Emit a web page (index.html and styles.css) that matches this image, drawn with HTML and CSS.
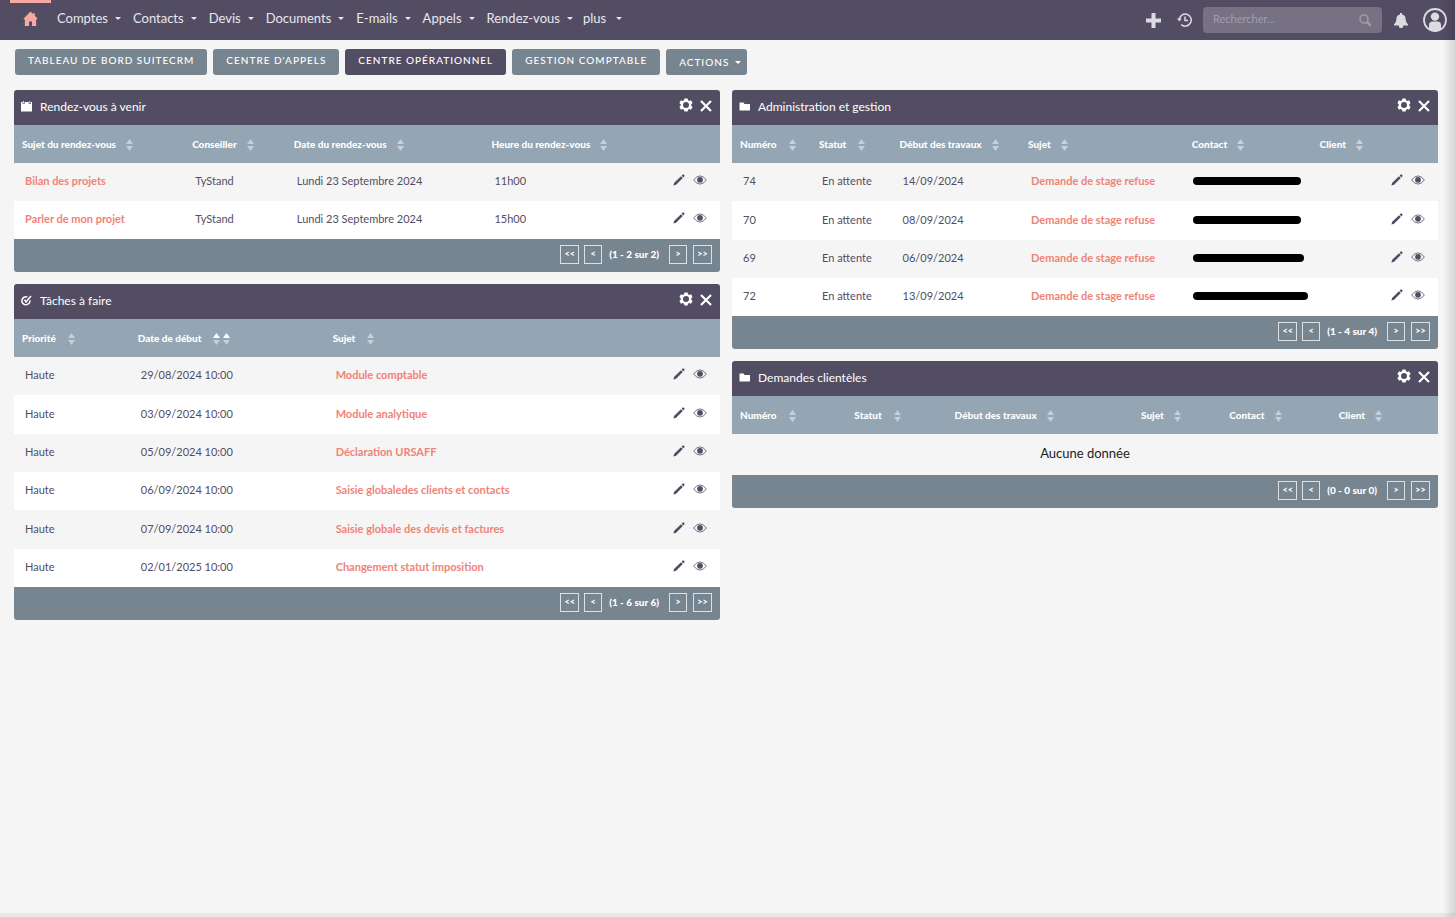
FILE: index.html
```html
<!DOCTYPE html>
<html lang="fr">
<head>
<meta charset="utf-8">
<title>SuiteCRM</title>
<link rel="stylesheet" href="styles.css">
</head>
<body>
<svg class="sprite" aria-hidden="true">
  <symbol id="i-home" viewBox="0 0 16 16"><path d="M8 0 0.5 7.6 1.2 8.6H2V15.5H6.4V10.6H9.6V15.5H14V8.6H14.8L15.5 7.6 12.6 4.6V1.8H10.8V2.8Z"/></symbol>
  <symbol id="i-sort" viewBox="0 0 7 12"><path class="up" d="M3.5 0 7 5H0Z"/><path class="down" d="M0 7H7L3.5 12Z"/></symbol>
  <symbol id="i-gear" viewBox="0 0 14 14"><path fill-rule="evenodd" d="M5.4 0.4H8.6L9 2.2 10.3 2.9 12 2.3 13.6 5 12.3 6.3V7.7L13.6 9 12 11.7 10.3 11.1 9 11.8 8.6 13.6H5.4L5 11.8 3.7 11.1 2 11.7 0.4 9 1.7 7.7V6.3L0.4 5 2 2.3 3.7 2.9 5 2.2ZM7 4A3 3 0 1 0 7 10 3 3 0 1 0 7 4Z"/></symbol>
  <symbol id="i-close" viewBox="0 0 12 12"><path d="M1 1 11 11M11 1 1 11" fill="none" stroke="currentColor" stroke-width="2.2"/></symbol>
  <symbol id="i-pencil" viewBox="0 0 12 12"><path d="M0.4 11.6 1.2 8.8 8 2.2 9.8 4 3.1 10.7ZM8.6 1.6 9.7 0.6Q10.2 0.2 10.8 0.6L11.3 1.1Q11.8 1.7 11.4 2.2L10.4 3.4Z"/></symbol>
  <symbol id="i-eye" viewBox="0 0 14 10"><path d="M0.6 5Q7 -3.2 13.4 5 7 13.2 0.6 5Z" fill="none" stroke="currentColor" stroke-width="0.8"/><circle cx="7" cy="4.8" r="2.9"/></symbol>
  <symbol id="i-folder" viewBox="0 0 12 9"><path d="M0.5 0.5H4.5L5.5 2H11V8.5H0.5Z"/></symbol>
  <symbol id="i-calendar" viewBox="0 0 12 11"><path d="M0 1H1.6V3H3.6V1H7.8V3H9.8V1H11V10.4H0Z"/><path d="M2.2 0H3V2.4H2.2ZM8.4 0H9.2V2.4H8.4Z"/></symbol>
  <symbol id="i-task" viewBox="0 0 12 11"><path d="M8.9 5.4A4 4 0 1 1 6.4 2.1M3.6 4.6 5 7 10 0.9" fill="none" stroke="currentColor" stroke-width="1.5"/></symbol>
  <symbol id="i-plus" viewBox="0 0 15 15"><path d="M5.5 0H9.5V5.5H15V9.5H9.5V15H5.5V9.5H0V5.5H5.5Z"/></symbol>
  <symbol id="i-history" viewBox="0 0 15 14"><path d="M2.2 7A6 6 0 1 1 4.2 11.6M8 3.6V7.6H11" fill="none" stroke="currentColor" stroke-width="1.5"/><path d="M0 5.5H4.8L2.3 8.6Z"/></symbol>
  <symbol id="i-search" viewBox="0 0 13 13"><circle cx="5" cy="5" r="4" fill="none" stroke="currentColor" stroke-width="1.6"/><path d="M8 8 11.6 11.6" stroke="currentColor" stroke-width="2.8"/></symbol>
  <symbol id="i-bell" viewBox="0 0 14 15"><path d="M6 0H8V1.4Q11.6 2 11.6 6 11.6 9.6 14 11.4V12.6H9V14.2L8 15H6L5 14.2V12.6H0V11.4Q2.4 9.6 2.4 6 2.4 2 6 1.4Z"/></symbol>
  <symbol id="i-user" viewBox="0 0 24 24"><circle cx="12" cy="12" r="11" fill="none" stroke="currentColor" stroke-width="1.8"/><circle cx="12" cy="8.6" r="4.2"/><path d="M6 21V17Q6 13.4 9.6 13.4H14.4Q18 13.4 18 17V21Q12 25 6 21Z"/></symbol>
</svg>

<header class="topbar">
  <nav class="menu">
    <a class="home" href="#" aria-label="Accueil"><svg width="15" height="16"><use href="#i-home"/></svg></a>
    <a class="menu-item caret" href="#">Comptes</a>
    <a class="menu-item caret" href="#">Contacts</a>
    <a class="menu-item caret" href="#">Devis</a>
    <a class="menu-item caret" href="#">Documents</a>
    <a class="menu-item caret" href="#">E-mails</a>
    <a class="menu-item caret" href="#">Appels</a>
    <a class="menu-item caret" href="#">Rendez-vous</a>
    <a class="menu-item caret more" href="#">plus</a>
  </nav>
  <div class="tools">
    <button class="icon-btn" type="button" aria-label="Créer"><svg width="15" height="15"><use href="#i-plus"/></svg></button>
    <button class="icon-btn history" type="button" aria-label="Historique"><svg width="15" height="14"><use href="#i-history"/></svg></button>
    <form class="search">
      <input type="text" placeholder="Rechercher..." aria-label="Rechercher">
      <button class="icon-btn" type="button" aria-label="Lancer la recherche"><svg width="13" height="13"><use href="#i-search"/></svg></button>
    </form>
    <button class="icon-btn bell" type="button" aria-label="Notifications"><svg width="14" height="15"><use href="#i-bell"/></svg></button>
    <button class="icon-btn user" type="button" aria-label="Profil"><svg width="24" height="24"><use href="#i-user"/></svg></button>
  </div>
</header>

<main class="page">
  <div class="tabs">
    <button class="tab" type="button">TABLEAU DE BORD SUITECRM</button>
    <button class="tab" type="button">CENTRE D'APPELS</button>
    <button class="tab active" type="button">CENTRE OPÉRATIONNEL</button>
    <button class="tab" type="button">GESTION COMPTABLE</button>
    <button class="tab actions caret" type="button">ACTIONS</button>
  </div>

  <div class="columns">
    <div class="column">
      <section class="panel">
        <header class="panel-head">
          <svg width="12" height="11"><use href="#i-calendar"/></svg>
          <h2>Rendez-vous à venir</h2>
          <button class="icon-btn gear" type="button" aria-label="Configurer"><svg width="14" height="14"><use href="#i-gear"/></svg></button>
          <button class="icon-btn close" type="button" aria-label="Fermer"><svg width="12" height="12"><use href="#i-close"/></svg></button>
        </header>
        <table class="grid meetings">
          <colgroup><col class="c1"><col class="c2"><col class="c3"><col><col class="row-tools"></colgroup>
          <thead><tr>
            <th>Sujet du rendez-vous<svg class="sort"><use href="#i-sort"/></svg></th>
            <th>Conseiller<svg class="sort"><use href="#i-sort"/></svg></th>
            <th>Date du rendez-vous<svg class="sort"><use href="#i-sort"/></svg></th>
            <th>Heure du rendez-vous<svg class="sort"><use href="#i-sort"/></svg></th>
            <th></th>
          </tr></thead>
          <tbody>
            <tr><td><a href="#">Bilan des projets</a></td><td>TyStand</td><td>Lundi 23 Septembre 2024</td><td>11h00</td><td class="acts"><svg class="pencil"><use href="#i-pencil"/></svg><svg class="eye"><use href="#i-eye"/></svg></td></tr>
            <tr><td><a href="#">Parler de mon projet</a></td><td>TyStand</td><td>Lundi 23 Septembre 2024</td><td>15h00</td><td class="acts"><svg class="pencil"><use href="#i-pencil"/></svg><svg class="eye"><use href="#i-eye"/></svg></td></tr>
          </tbody>
        </table>
        <footer class="pager">
          <button class="far" type="button">&lt;&lt;</button><button type="button">&lt;</button><span>(1 - 2 sur 2)</span><button type="button">&gt;</button><button class="far" type="button">&gt;&gt;</button>
        </footer>
      </section>

      <section class="panel">
        <header class="panel-head">
          <svg width="12" height="11"><use href="#i-task"/></svg>
          <h2>Tâches à faire</h2>
          <button class="icon-btn gear" type="button" aria-label="Configurer"><svg width="14" height="14"><use href="#i-gear"/></svg></button>
          <button class="icon-btn close" type="button" aria-label="Fermer"><svg width="12" height="12"><use href="#i-close"/></svg></button>
        </header>
        <table class="grid tasks">
          <colgroup><col class="c1"><col class="c2"><col><col class="row-tools"></colgroup>
          <thead><tr>
            <th>Priorité<svg class="sort wide"><use href="#i-sort"/></svg></th>
            <th>Date de début<svg class="sort wide asc"><use href="#i-sort"/></svg><svg class="sort asc next"><use href="#i-sort"/></svg></th>
            <th>Sujet<svg class="sort wide"><use href="#i-sort"/></svg></th>
            <th></th>
          </tr></thead>
          <tbody>
            <tr><td>Haute</td><td>29/08/2024 10:00</td><td><a href="#">Module comptable</a></td><td class="acts"><svg class="pencil"><use href="#i-pencil"/></svg><svg class="eye"><use href="#i-eye"/></svg></td></tr>
            <tr><td>Haute</td><td>03/09/2024 10:00</td><td><a href="#">Module analytique</a></td><td class="acts"><svg class="pencil"><use href="#i-pencil"/></svg><svg class="eye"><use href="#i-eye"/></svg></td></tr>
            <tr><td>Haute</td><td>05/09/2024 10:00</td><td><a href="#">Déclaration URSAFF</a></td><td class="acts"><svg class="pencil"><use href="#i-pencil"/></svg><svg class="eye"><use href="#i-eye"/></svg></td></tr>
            <tr><td>Haute</td><td>06/09/2024 10:00</td><td><a href="#">Saisie globaledes clients et contacts</a></td><td class="acts"><svg class="pencil"><use href="#i-pencil"/></svg><svg class="eye"><use href="#i-eye"/></svg></td></tr>
            <tr><td>Haute</td><td>07/09/2024 10:00</td><td><a href="#">Saisie globale des devis et factures</a></td><td class="acts"><svg class="pencil"><use href="#i-pencil"/></svg><svg class="eye"><use href="#i-eye"/></svg></td></tr>
            <tr><td>Haute</td><td>02/01/2025 10:00</td><td><a href="#">Changement statut imposition</a></td><td class="acts"><svg class="pencil"><use href="#i-pencil"/></svg><svg class="eye"><use href="#i-eye"/></svg></td></tr>
          </tbody>
        </table>
        <footer class="pager">
          <button class="far" type="button">&lt;&lt;</button><button type="button">&lt;</button><span>(1 - 6 sur 6)</span><button type="button">&gt;</button><button class="far" type="button">&gt;&gt;</button>
        </footer>
      </section>
    </div>

    <div class="column">
      <section class="panel">
        <header class="panel-head">
          <svg width="12" height="9"><use href="#i-folder"/></svg>
          <h2>Administration et gestion</h2>
          <button class="icon-btn gear" type="button" aria-label="Configurer"><svg width="14" height="14"><use href="#i-gear"/></svg></button>
          <button class="icon-btn close" type="button" aria-label="Fermer"><svg width="12" height="12"><use href="#i-close"/></svg></button>
        </header>
        <table class="grid admin">
          <colgroup><col class="c1"><col class="c2"><col class="c3"><col class="c4"><col class="c5"><col><col class="row-tools"></colgroup>
          <thead><tr>
            <th>Numéro<svg class="sort wide"><use href="#i-sort"/></svg></th>
            <th>Statut<svg class="sort wide"><use href="#i-sort"/></svg></th>
            <th>Début des travaux<svg class="sort"><use href="#i-sort"/></svg></th>
            <th>Sujet<svg class="sort"><use href="#i-sort"/></svg></th>
            <th>Contact<svg class="sort"><use href="#i-sort"/></svg></th>
            <th>Client<svg class="sort"><use href="#i-sort"/></svg></th>
            <th></th>
          </tr></thead>
          <tbody>
            <tr><td>74</td><td>En attente</td><td>14/09/2024</td><td><a href="#">Demande de stage refuse</a></td><td class="hidden-name"><i class="bar"></i></td><td></td><td class="acts"><svg class="pencil"><use href="#i-pencil"/></svg><svg class="eye"><use href="#i-eye"/></svg></td></tr>
            <tr><td>70</td><td>En attente</td><td>08/09/2024</td><td><a href="#">Demande de stage refuse</a></td><td class="hidden-name"><i class="bar"></i></td><td></td><td class="acts"><svg class="pencil"><use href="#i-pencil"/></svg><svg class="eye"><use href="#i-eye"/></svg></td></tr>
            <tr><td>69</td><td>En attente</td><td>06/09/2024</td><td><a href="#">Demande de stage refuse</a></td><td class="hidden-name"><i class="bar medium"></i></td><td></td><td class="acts"><svg class="pencil"><use href="#i-pencil"/></svg><svg class="eye"><use href="#i-eye"/></svg></td></tr>
            <tr><td>72</td><td>En attente</td><td>13/09/2024</td><td><a href="#">Demande de stage refuse</a></td><td class="hidden-name"><i class="bar long"></i></td><td></td><td class="acts"><svg class="pencil"><use href="#i-pencil"/></svg><svg class="eye"><use href="#i-eye"/></svg></td></tr>
          </tbody>
        </table>
        <footer class="pager">
          <button class="far" type="button">&lt;&lt;</button><button type="button">&lt;</button><span>(1 - 4 sur 4)</span><button type="button">&gt;</button><button class="far" type="button">&gt;&gt;</button>
        </footer>
      </section>

      <section class="panel">
        <header class="panel-head">
          <svg width="12" height="9"><use href="#i-folder"/></svg>
          <h2>Demandes clientèles</h2>
          <button class="icon-btn gear" type="button" aria-label="Configurer"><svg width="14" height="14"><use href="#i-gear"/></svg></button>
          <button class="icon-btn close" type="button" aria-label="Fermer"><svg width="12" height="12"><use href="#i-close"/></svg></button>
        </header>
        <table class="grid requests">
          <colgroup><col class="c1"><col class="c2"><col class="c3"><col class="c4"><col class="c5"><col></colgroup>
          <thead><tr>
            <th>Numéro<svg class="sort wide"><use href="#i-sort"/></svg></th>
            <th>Statut<svg class="sort wide"><use href="#i-sort"/></svg></th>
            <th>Début des travaux<svg class="sort"><use href="#i-sort"/></svg></th>
            <th>Sujet<svg class="sort"><use href="#i-sort"/></svg></th>
            <th>Contact<svg class="sort"><use href="#i-sort"/></svg></th>
            <th>Client<svg class="sort"><use href="#i-sort"/></svg></th>
          </tr></thead>
          <tbody>
            <tr><td class="empty" colspan="6">Aucune donnée</td></tr>
          </tbody>
        </table>
        <footer class="pager">
          <button class="far" type="button">&lt;&lt;</button><button type="button">&lt;</button><span>(0 - 0 sur 0)</span><button type="button">&gt;</button><button class="far" type="button">&gt;&gt;</button>
        </footer>
      </section>
    </div>
  </div>
</main>
<div class="bottom-strip"></div>
<div class="edge-shade"></div>
</body>
</html>
```

FILE: styles.css
```css
* { box-sizing: border-box; }

body {
  margin: 0;
  min-height: 100vh;
  display: flex;
  flex-direction: column;
  background: #f5f5f5;
  color: #534d64;
  font: 11px/16px Lato, "Liberation Sans", sans-serif;
}

svg { display: block; fill: currentColor; flex: none; }
.sprite { position: absolute; width: 0; height: 0; }
a { color: inherit; text-decoration: none; }
button, input { font: inherit; color: inherit; }

.icon-btn {
  display: flex;
  padding: 0;
  border: 0;
  background: none;
}

.caret::after {
  content: "";
  border: 3px solid transparent;
  border-top-color: currentColor;
  border-bottom: 0;
}

/* Top bar */
.topbar {
  display: flex;
  justify-content: space-between;
  height: 40px;
  padding: 0 8px 0 10px;
  background: #534d64;
  color: #e9e7ee;
}
.menu { display: flex; gap: 12px; font-size: 13px; }
.home {
  display: flex;
  justify-content: center;
  width: 41px;
  margin-right: -6px;
  padding-top: 8px;
  border-top: 3px solid #f5a9a2;
  color: #f5a9a2;
}
.menu-item {
  display: flex;
  align-items: center;
  gap: 7px;
  height: 36px;
}
.menu-item.more { gap: 10px; margin-left: -2px; }
.tools {
  display: flex;
  align-items: center;
  color: #dddbe2;
}
.history { margin: 0 11px 0 16px; }
.search {
  display: flex;
  align-items: center;
  width: 179px;
  height: 26px;
  padding: 0 10px;
  border-radius: 4px;
  background: #777184;
  color: #9f9aaa;
}
.search input {
  flex: 1;
  min-width: 0;
  padding: 0 0 2px;
  border: 0;
  background: none;
}
.search input::placeholder { color: #a39eae; }
.bell { margin: 0 15px 0 12px; }

/* Dashboard tabs */
.page { flex: 1; padding: 9px 17px 0 14px; }
.tabs { display: flex; gap: 6px; margin: 0 0 15px 1px; }
.tab {
  height: 26px;
  padding: 0 13px 4px;
  border: 0;
  border-radius: 3px;
  background: #778591;
  color: #fff;
  font-size: 10px;
  font-weight: 500;
  letter-spacing: 1px;
}
.tab.active { background: #534d64; }
.tab.actions {
  display: flex;
  align-items: center;
  gap: 6px;
  padding: 0 6px 0 13px;
}

/* Dashlets */
.columns {
  display: grid;
  grid-template-columns: 1fr 1fr;
  gap: 12px;
  align-items: start;
}
.column { display: grid; gap: 12px; }
.panel { overflow: hidden; border-radius: 3px; }
.panel-head {
  display: flex;
  align-items: center;
  height: 35px;
  padding: 0 8px 3px 7px;
  background: #534d64;
  color: #fff;
}
.panel-head h2 {
  flex: 1;
  margin: 0 0 0 7px;
  font-size: 12px;
  font-weight: 400;
  padding-top: 1px;
}
.panel-head .gear { padding-bottom: 2px; }
.panel-head .close { margin-left: 7px; }

.grid { width: 100%; border-collapse: collapse; table-layout: fixed; }
.grid th {
  height: 38px;
  padding: 0 0 0 8px;
  background: #94a5b3;
  color: #fff;
  font-size: 10px;
  font-weight: 900;
  text-align: left;
  white-space: nowrap;
}
.grid td {
  height: 38px;
  padding: 0 0 2px 11px;
  white-space: nowrap;
}
.grid tbody tr:nth-child(even) { background: #fff; }
.grid tbody tr:nth-child(3n+2):not(:last-child) td { height: 39px; }
.grid td a { color: #f08377; font-weight: 700; }

.row-tools { width: 60px; }
.meetings .c1 { width: 24.1%; }
.meetings .c2 { width: 14.4%; }
.meetings .c3 { width: 28%; }
.tasks .c1 { width: 16.4%; }
.tasks .c2 { width: 27.6%; }
.admin .c1 { width: 11.2%; }
.admin .c2 { width: 11.4%; }
.admin .c3 { width: 18.2%; }
.admin .c4 { width: 23.2%; }
.admin .c5 { width: 18.1%; }
.requests .c1 { width: 16.2%; }
.requests .c2 { width: 14.2%; }
.requests .c3 { width: 26.4%; }
.requests .c4 { width: 12.5%; }
.requests .c5 { width: 15.5%; }

.sort {
  display: inline-block;
  width: 7px;
  height: 12px;
  margin-left: 10px;
  vertical-align: -3px;
  color: #c6d0d8;
}
.sort.wide { margin-left: 12px; }
.sort.next { margin-left: 3px; }
.up { fill: var(--up, currentColor); }
.asc { --up: #fff; }

.grid .acts { padding: 0 13px 6px 0; text-align: right; }
.pencil, .eye { display: inline-block; vertical-align: middle; }
.pencil { width: 12px; height: 12px; margin-right: 8px; }
.eye { width: 14px; height: 10px; }

.grid .hidden-name { padding-left: 9px; }
.bar {
  display: block;
  width: 108px;
  height: 8px;
  border-radius: 4px;
  background: #000;
}
.bar.medium { width: 111px; }
.bar.long { width: 115px; }

.grid .empty {
  height: 41px;
  padding: 0 0 3px;
  color: #222;
  font-family: Lato, "Liberation Sans", sans-serif;
  font-size: 13px;
  text-align: center;
}

.pager {
  display: flex;
  justify-content: flex-end;
  align-items: center;
  height: 33px;
  padding: 0 8px 3px 0;
  background: #778591;
  color: #fff;
  font-size: 10px;
  font-weight: 900;
}
.pager button {
  width: 18px;
  height: 19px;
  padding: 0 0 1px;
  border: 1px solid #dde1e4;
  background: none;
  font-size: 9px;
  line-height: 12px;
}
.pager .far { width: 19px; }
.pager .far:first-child { margin-right: 5px; }
.pager .far:last-child { margin-left: 6px; }
.pager span { margin: 0 10px 0 7px; }

.bottom-strip { height: 4px; background: #e8e8e8; }
.edge-shade {
  position: fixed;
  top: 0;
  right: 0;
  bottom: 0;
  width: 12px;
  background: linear-gradient(to right, rgba(0, 0, 0, 0), rgba(0, 0, 0, 0.12));
  pointer-events: none;
}
```
